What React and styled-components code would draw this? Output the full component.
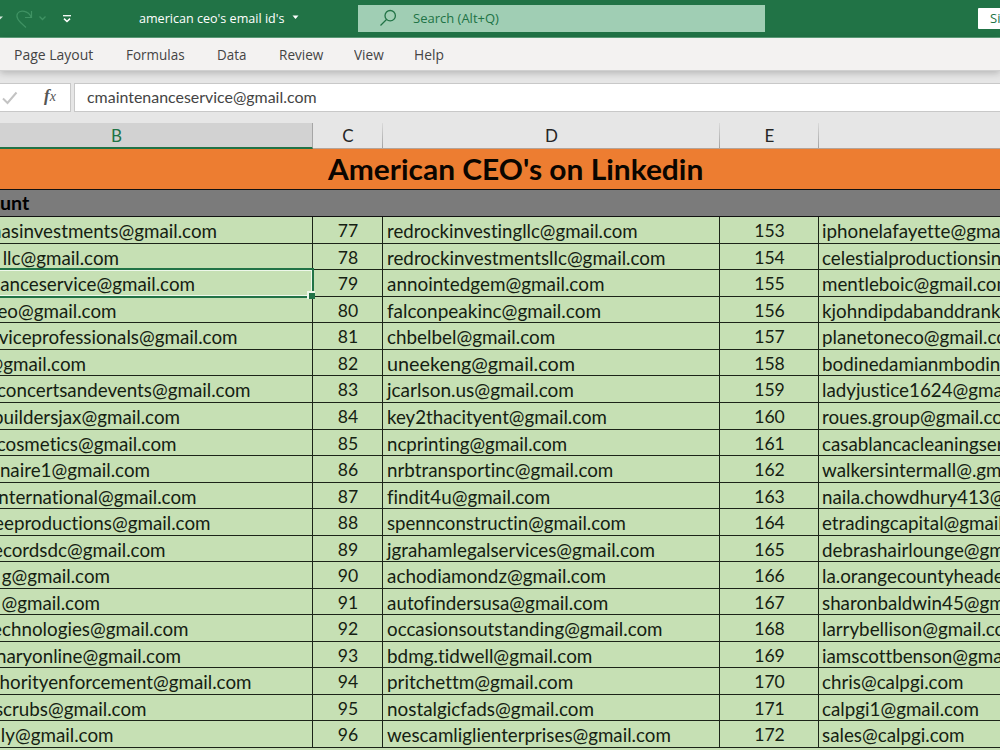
import React, { useLayoutEffect, useRef, useState } from "react";
import styled, { createGlobalStyle } from "styled-components";

const tabs = [
  { label: "Page Layout", width: 79, gap: 33 },
  { label: "Formulas", width: 58.5, gap: 32.5 },
  { label: "Data", width: 29.5, gap: 32 },
  { label: "Review", width: 44, gap: 31 },
  { label: "View", width: 30, gap: 30.5 },
  { label: "Help", width: 29.5, gap: 0 },
];

const columns = [
  { name: "B", active: true },
  { name: "C" },
  { name: "D" },
  { name: "E" },
  { name: "" },
];

// account (with the x of its right end), second account (with its width), third account
const rows = [
  ["hasinvestments@gmail.com", 217, "redrockinvestingllc@gmail.com", 251, "iphonelafayette@gmail.com"],
  ["llc@gmail.com", 119, "redrockinvestmentsllc@gmail.com", 278, "celestialproductionsinc@gmail.com"],
  ["anceservice@gmail.com", 195, "annointedgem@gmail.com", 217, "mentleboic@gmail.com"],
  ["eo@gmail.com", 116.5, "falconpeakinc@gmail.com", 214, "kjohndipdabanddrank@gmail.com"],
  ["viceprofessionals@gmail.com", 237.5, "chbelbel@gmail.com", 168.5, "planetoneco@gmail.com"],
  ["@gmail.com", 86, "uneekeng@gmail.com", 187.5, "bodinedamianmbodine@gmail.com"],
  ["concertsandevents@gmail.com", 250.5, "jcarlson.us@gmail.com", 187, "ladyjustice1624@gmail.com"],
  ["buildersjax@gmail.com", 180, "key2thacityent@gmail.com", 220, "roues.group@gmail.com"],
  ["cosmetics@gmail.com", 176.5, "ncprinting@gmail.com", 180.5, "casablancacleaningservice@gmail.com"],
  ["naire1@gmail.com", 150, "nrbtransportinc@gmail.com", 226, "walkersintermall@.gmail.com"],
  ["nternational@gmail.com", 196.5, "findit4u@gmail.com", 163, "naila.chowdhury413@gmail.com"],
  ["eeproductions@gmail.com", 210.5, "spennconstructin@gmail.com", 239, "etradingcapital@gmail.com"],
  ["ecordsdc@gmail.com", 165.5, "jgrahamlegalservices@gmail.com", 268, "debrashairlounge@gmail.com"],
  ["g@gmail.com", 110, "achodiamondz@gmail.com", 219, "la.orangecountyheaders@gmail.com"],
  ["@gmail.com", 100, "autofindersusa@gmail.com", 221, "sharonbaldwin45@gmail.com"],
  ["echnologies@gmail.com", 188.5, "occasionsoutstanding@gmail.com", 275.5, "larrybellison@gmail.com"],
  ["naryonline@gmail.com", 181, "bdmg.tidwell@gmail.com", 205, "iamscottbenson@gmail.com"],
  ["horityenforcement@gmail.com", 251.5, "pritchettm@gmail.com", 186, "chris@calpgi.com"],
  ["scrubs@gmail.com", 146.5, "nostalgicfads@gmail.com", 207, "calpgi1@gmail.com"],
  ["ly@gmail.com", 113.5, "wescamliglienterprises@gmail.com", 283.5, "sales@calpgi.com"],
];

// Squeezes or stretches a text horizontally to the given width
const Fit = ({ width, children }) => {
  const ref = useRef(null);
  const [scale, setScale] = useState(1);

  useLayoutEffect(() => {
    setScale(width / ref.current.offsetWidth);
  }, [width, children]);

  return (
    <FitBox $width={width}>
      <FitText ref={ref} style={{ transform: `scaleX(${scale})` }}>
        {children}
      </FitText>
    </FitBox>
  );
};

const App = () => {
  return (
    <Window>
      <GlobalStyle />
      <TitleBar>
        <QuickAccess>
          <svg width="80" height="37" viewBox="0 0 80 37" fill="none">
            <path d="M-3 16.5L0 19.5L3 16.5Z" fill="#d5e8dc" />
            <path
              d="M31.5 11V17.5H25M31 17C28.500 10.500 20 9.500 17.500 13.500C15.500 17.500 18 20.500 26 27.500"
              stroke="#3f9263"
              strokeWidth="1.200"
            />
            <path d="M39.500 16.500L42.500 19.500L45.500 16.500" stroke="#3f9263" strokeWidth="1.300" />
            <path d="M63 15.700H71" stroke="#fff" strokeWidth="1.300" />
            <path d="M64 18.700L67 21.500L70 18.700" stroke="#fff" strokeWidth="1.600" />
          </svg>
        </QuickAccess>
        <FileName>
          <Fit width={146}>american ceo's email id's</Fit>
          <svg width="7" height="5" viewBox="0 0 7 5">
            <path d="M0.500 0.500H6.500L3.500 4Z" fill="#fff" />
          </svg>
        </FileName>
        <SearchBox>
          <svg width="17" height="18" viewBox="0 0 17 18" fill="none" stroke="#217346" strokeWidth="1.300">
            <circle cx="10.200" cy="6.700" r="5.200" />
            <path d="M6.500 10.500L0.500 16.500" />
          </svg>
          <Fit width={86}>Search (Alt+Q)</Fit>
        </SearchBox>
        <SignIn>Sign in</SignIn>
      </TitleBar>
      <Ribbon>
        {tabs.map((tab) => (
          <Tab key={tab.label} $gap={tab.gap}>
            <Fit width={tab.width}>{tab.label}</Fit>
          </Tab>
        ))}
      </Ribbon>
      <FormulaBar>
        <FormulaTools>
          <svg width="16" height="14" viewBox="0 0 16 14" fill="none">
            <path d="M1 7.500L5.500 12L14.500 1.500" stroke="#c3c3c3" strokeWidth="2" />
          </svg>
          <Fx>
            f<small>x</small>
          </Fx>
        </FormulaTools>
        <FormulaInput>
          <Fit width={230}>cmaintenanceservice@gmail.com</Fit>
        </FormulaInput>
      </FormulaBar>
      <ColumnHeads>
        {columns.map((col) => (
          <ColumnHead key={col.name} $active={col.active}>
            {col.name}
          </ColumnHead>
        ))}
      </ColumnHeads>
      <SheetTitle>
        <Fit width={375}>American CEO's on Linkedin</Fit>
      </SheetTitle>
      <SheetSubtitle>
        <Fit width={29.5}>unt</Fit>
      </SheetSubtitle>
      <Grid>
        {rows.map(([first, end, second, width, third], i) => (
          <React.Fragment key={i}>
            <Cell $end={end}>
              {first}
              {i === 2 && <Selection />}
            </Cell>
            <Cell $center>{77 + i}</Cell>
            <Cell>
              <Fit width={width}>{second}</Fit>
            </Cell>
            <Cell $center>{153 + i}</Cell>
            <Cell $last>{third}</Cell>
          </React.Fragment>
        ))}
      </Grid>
    </Window>
  );
};

const GlobalStyle = createGlobalStyle`
  * {
    box-sizing: border-box;
  }

  body {
    margin: 0;
    overflow: hidden;
  }
`;

const FitBox = styled.span`
  display: inline-block;
  flex: none;
  width: ${(props) => props.$width}px;
  white-space: nowrap;
`;

const FitText = styled.span`
  display: inline-block;
  transform-origin: 0 50%;
`;

const Window = styled.div`
  display: flex;
  flex-direction: column;
  width: 1000px;
  height: 750px;
  overflow: hidden;
  background: #c6e0b4;
  font-family: "Open Sans", "Noto Sans", sans-serif;
`;

const TitleBar = styled.div`
  display: flex;
  flex: none;
  align-items: center;
  height: 38px;
  background: #217346;
  border-bottom: 1px solid #5fa27c;
  color: #fff;
  font-size: 13px;
  line-height: 18px;
`;

const QuickAccess = styled.div`
  flex: none;
  width: 139px;
  height: 37px;
`;

const FileName = styled.div`
  display: flex;
  flex: none;
  align-items: center;
  gap: 7px;
  width: 219px;
  padding-bottom: 2px;
`;

const SearchBox = styled.div`
  display: flex;
  flex: none;
  align-items: center;
  gap: 16px;
  width: 407px;
  height: 27px;
  padding-left: 22px;
  padding-bottom: 1px;
  background: #a0ceb4;
  color: #217346;
`;

const SignIn = styled.div`
  flex: none;
  width: 70px;
  height: 21px;
  margin-left: 213px;
  padding-left: 12px;
  border-radius: 1px;
  background: #fff;
  color: #217346;
  line-height: 20px;
`;

const Ribbon = styled.div`
  position: relative;
  display: flex;
  flex: none;
  align-items: center;
  height: 33px;
  padding-left: 14px;
  background: #f3f2f1;
  border-bottom: 1px solid #d0d0d0;
  box-shadow: 0 2px 7px rgba(0, 0, 0, 0.22);
  color: #444;
  font-size: 14.5px;
`;

const Tab = styled.div`
  margin-right: ${(props) => props.$gap}px;
`;

const FormulaBar = styled.div`
  display: flex;
  flex: none;
  gap: 3px;
  height: 41px;
  padding-top: 12px;
  background: #e6e6e6;
`;

const FormulaTools = styled.div`
  display: flex;
  align-items: center;
  width: 71px;
  padding-left: 2px;
  gap: 26px;
  background: #fff;
  border: 1px solid #c8c8c8;
  border-left: none;
`;

const Fx = styled.span`
  padding-bottom: 2px;
  color: #555;
  font: italic bold 17px/20px "Liberation Serif", serif;

  small {
    font-size: 14px;
    font-weight: normal;
  }
`;

const FormulaInput = styled.div`
  flex: 1;
  padding-left: 12px;
  background: #fff;
  border: 1px solid #c8c8c8;
  border-right: none;
  color: #444;
  font: 15.8px/26px Lato, sans-serif;
`;

const ColumnHeads = styled.div`
  display: grid;
  flex: none;
  grid-template-columns: 313px 70px 337px 99px 1fr;
  height: 37px;
  padding-top: 11px;
  background: #e6e6e6;
  border-bottom: 1px solid #b5a498;
`;

const ColumnHead = styled.div`
  height: ${(props) => (props.$active ? 26 : 25)}px;
  padding-left: ${(props) => (props.$active ? 0 : 1)}px;
  padding-right: ${(props) => (props.$active ? 79 : 0)}px;
  background: ${(props) => (props.$active ? "#d2d2d2" : "transparent")};
  border-right: 1px solid;
  border-bottom: ${(props) => (props.$active ? "2px solid #217346" : "none")};
  border-image: linear-gradient(#dcdcdc, #a0a0a0) 1;
  color: ${(props) => (props.$active ? "#217346" : "#262626")};
  font: 17px/26px Lato, sans-serif;
  text-align: center;

  &:last-child {
    border: none;
  }

  ${(props) =>
    props.$active &&
    `
    border-image: none;
    border-right-color: #a6a6a6;
  `}
`;

const SheetTitle = styled.div`
  flex: none;
  height: 41px;
  padding-left: 328px;
  background: #ed7d31;
  border-bottom: 1px solid #111;
  color: #0a0500;
  font: bold 28px/41px Lato, sans-serif;
`;

const SheetSubtitle = styled.div`
  flex: none;
  height: 27.4px;
  background: #7b7b7b;
  border-bottom: 1px solid #111;
  color: #000;
  font: bold 18.6px/27px Lato, sans-serif;
`;

const Grid = styled.div`
  display: grid;
  flex: none;
  grid-template-columns: 313px 70px 337px 99px 1fr;
  grid-auto-rows: 26.53px;
  width: 1000px;
  font: 18.8px/27px Lato, sans-serif;
  font-variant-ligatures: none;
  color: #152012;
`;

const Cell = styled.div`
  position: relative;
  display: flex;
  justify-content: ${(props) =>
    props.$center ? "center" : props.$end ? "flex-end" : "flex-start"};
  min-width: 0;
  padding-left: ${(props) =>
    props.$center ? 1 : props.$end ? 0 : props.$last ? 3 : 4}px;
  padding-right: ${(props) => (props.$end ? 312 - props.$end : 0)}px;
  background: #c6e0b4;
  border-right: ${(props) => (props.$last ? "none" : "1px solid #1c2418")};
  border-bottom: 1px solid #1c2418;
  font-size: ${(props) => (props.$center ? 17.6 : 18.8)}px;
  white-space: nowrap;
`;

const Selection = styled.div`
  position: absolute;
  z-index: 1;
  top: -2px;
  right: -2px;
  bottom: -2px;
  left: -4px;
  border: 2px solid #217346;
  box-shadow: inset 0 0 0 1px #eef8ea;

  &::after {
    content: "";
    position: absolute;
    right: -3px;
    bottom: -3px;
    width: 6px;
    height: 6px;
    background: #217346;
    box-shadow: -1px -1px 0 1px #eef8ea;
  }
`;

export default App;
